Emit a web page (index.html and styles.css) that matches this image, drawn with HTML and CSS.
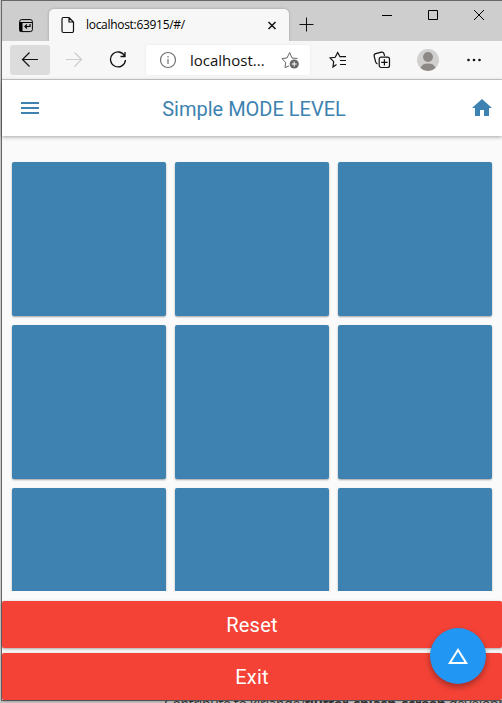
FILE: index.html
```html
<!DOCTYPE html>
<html lang="en">
<head>
<meta charset="utf-8">
<title>Simple MODE LEVEL</title>
<link rel="stylesheet" href="styles.css">
</head>
<body>
<div class="window">
  <div class="tabstrip">
    <svg class="tab-actions" width="16" height="16" viewBox="0 0 16 16" fill="none" stroke="#000"><rect x="1.600" y="2.600" width="12.800" height="12" rx="2"/><path d="M2 5.500h12" /><path d="M3 5v9.500" stroke-width="3"/><path d="M12 7v2.500H7M9 7.500L7 9.500l2 2" stroke-width="1.200"/></svg>
    <div class="tab">
      <svg width="14" height="18" viewBox="0 0 14 18" fill="none" stroke="#111" stroke-width="1.200"><path d="M2.500 1.500H8l4.500 4.500v9a1.500 1.500 0 0 1-1.500 1.500H2.500A1.500 1.500 0 0 1 1 15V3a1.500 1.500 0 0 1 1.500-1.500zM8 1.500V6h4.500"/></svg>
      <span class="tab-title">localhost:63915/#/</span>
      <svg class="tab-close" width="10" height="10" viewBox="0 0 10 10" stroke="#111" stroke-width="1.500"><path d="M1.500 2l7 7M8.500 2l-7 7"/></svg>
    </div>
    <svg class="new-tab" width="15" height="15" viewBox="0 0 15 15" stroke="#111"><path d="M7.500 0.500v14M0.500 7.500h14"/></svg>
    <div class="controls">
      <svg width="10" height="10" viewBox="0 0 10 10" stroke="#000"><path d="M0 5.500h10"/></svg>
      <svg width="10" height="10" viewBox="0 0 10 10" fill="none" stroke="#000"><path d="M.5.5h9v9h-9z"/></svg>
      <svg width="10" height="10" viewBox="0 0 10 10" stroke="#000"><path d="M0 0l10 10M10 0L0 10"/></svg>
    </div>
  </div>
  <div class="toolbar">
    <div class="back"><svg width="18" height="16" viewBox="0 0 18 16" fill="none" stroke="#111" stroke-width="1.200"><path d="M17 7.500H1.500M8.500.5l-7 7 7 7"/></svg></div>
    <svg class="forward" width="18" height="16" viewBox="0 0 18 16" fill="none" stroke="#ccc" stroke-width="1.200"><path d="M1 7.500h15.500M9.500.5l7 7-7 7"/></svg>
    <svg class="reload" width="18" height="18" viewBox="0 0 18 18" fill="none" stroke="#111" stroke-width="1.300"><path d="M15.700 5A7.500 7.500 0 1 0 16.500 9M16 1v4.500h-4.500"/></svg>
    <div class="address">
      <svg width="18" height="18" viewBox="0 0 18 18" fill="none" stroke="#717171" stroke-width="1.200"><circle cx="9" cy="9" r="7.500"/><path d="M9 8v5M9 5v1.500"/></svg>
      <span class="url">localhost...</span>
      <svg class="star" width="19" height="18" viewBox="0 0 19 18" fill="none" stroke="#666"><path d="M8 15l-4 1.500.7-5L1 7.500 6 7l2.700-5.500L11 7l5.500.5"/><circle cx="13.200" cy="13" r="4.600" fill="#666" stroke="none"/><path d="M13.200 10.500v5M10.700 13h5" stroke="#fff"/></svg>
    </div>
    <svg class="favorites" width="18" height="18" viewBox="0 0 18 18" fill="none" stroke="#111" stroke-width="1.200"><path d="M7.500 13.500L4 16l.7-5.300L1 7l5.200-.7L8.700 1.500l2.300 4.200H17M11 9.500h6M11 13.500h6"/></svg>
    <svg class="collections" width="18" height="18" viewBox="0 0 18 18" fill="none" stroke="#111" stroke-width="1.200"><path d="M4.500 13C3.500 12.500 3 12 2.700 11L1.200 5.300C.9 4 1.400 3 2.600 2.600L8.500 1.200c1.400-.3 2 .2 2.500 1.600l.6 2"/><rect x="6.200" y="6.200" width="10.300" height="10.300" rx="2"/><path d="M11.400 8.200v6.400M8.200 11.400h6.400"/></svg>
    <svg class="profile" width="22" height="22" viewBox="0 0 22 22"><circle cx="11" cy="11" r="11" fill="#d2d0ce"/><circle cx="11" cy="8" r="5" fill="#8c8886"/><path d="M3.500 19c1-3.300 3.500-4.500 7.500-4.500s6.500 1.200 7.500 4.500a11 11 0 0 1-15 0z" fill="#8c8886"/></svg>
    <svg class="more" width="14" height="4" viewBox="0 0 14 4" fill="#111"><circle cx="1.500" cy="2" r="1.300"/><circle cx="7" cy="2" r="1.300"/><circle cx="12.500" cy="2" r="1.300"/></svg>
  </div>
  <div class="app">
    <header class="appbar">
      <svg width="24" height="24" viewBox="0 0 24 24" fill="#3d82b0"><path d="M3 18h18v-2H3v2zm0-5h18v-2H3v2zm0-7v2h18V6H3z"/></svg>
      <h1>Simple MODE LEVEL</h1>
      <svg width="24" height="24" viewBox="0 0 24 24" fill="#3d82b0"><path d="M10 20v-6h4v6h5v-8h3L12 3 2 12h3v8z"/></svg>
    </header>
    <main class="grid">
      <div class="card"></div><div class="card"></div><div class="card"></div>
      <div class="card"></div><div class="card"></div><div class="card"></div>
      <div class="card"></div><div class="card"></div><div class="card"></div>
    </main>
    <div class="actions">
      <button>Reset</button>
      <button>Exit</button>
    </div>
    <div class="fab"><svg width="24" height="24" viewBox="0 0 24 24" fill="#fff"><path d="M12 7.770L18.390 18H5.610L12 7.770M12 4L2 20h20L12 4z"/></svg></div>
  </div>
</div>
<div class="behind">Contribute to kiriande/<b>flutter_splash_screen</b> development</div>
</body>
</html>
```
FILE: styles.css
```css
* { box-sizing: border-box; }
body {
  margin: 0;
  width: 502px;
  height: 703px;
  overflow: hidden;
  background: #c9c7c6;
}
svg { display: block; flex: none; }
.window {
  height: 701px;
  margin-left: 1px;
  border: solid #68666a;
  border-width: 1px 0 1px 1px;
  background: #fafafa;
}
.tabstrip {
  display: flex;
  height: 40px;
  background: #cecece;
}
.tab-actions { margin: 16px 15px 0 16px; }
.tab {
  display: flex;
  align-items: center;
  width: 240px;
  height: 32px;
  margin-top: 8px;
  padding: 0 12px;
  border-radius: 5px 5px 0 0;
  background: #f7f7f7;
  box-shadow: 0 0 3px rgba(0, 0, 0, .25);
}
.tab-title {
  margin-left: 11px;
  font: 12px/16px "Open Sans", "Noto Sans", sans-serif;
  letter-spacing: -.3px;
  color: #000;
}
.tab-close { margin-left: auto; }
.new-tab { margin: 16px 0 0 10px; }
.controls {
  display: flex;
  gap: 36px;
  margin: 9px 18px 0 auto;
}
.toolbar {
  position: relative;
  display: flex;
  align-items: center;
  height: 39px;
  padding-left: 8px;
  background: #f7f7f7;
  border-bottom: 1px solid #ccc;
}
.back {
  display: flex;
  align-items: center;
  justify-content: center;
  width: 40px;
  height: 30px;
  border-radius: 3px;
  background: #dcdcdc;
}
.forward { margin-left: 15px; }
.reload { margin-left: 26px; }
.address {
  display: flex;
  align-items: center;
  width: 164px;
  height: 30px;
  margin-left: 19px;
  padding: 0 10px 0 13px;
  border-radius: 4px;
  background: #fff;
  box-shadow: 0 0 3px rgba(0, 0, 0, .06);
}
.url {
  margin-left: 13px;
  font: 15px/20px "Open Sans", "Noto Sans", sans-serif;
  color: #111;
}
.star { margin-left: auto; }
.favorites { margin-left: 19px; }
.collections { margin-left: 26px; }
.profile { margin-left: 26px; }
.more { margin-left: 28px; }
.app {
  position: relative;
  height: 620px;
  font-family: Roboto, sans-serif;
}
.appbar {
  position: relative;
  display: flex;
  align-items: center;
  justify-content: space-between;
  height: 56px;
  padding: 0 8px 0 16px;
  background: #fff;
  box-shadow: 0 1px 4px rgba(0, 0, 0, .35);
}
.appbar h1 {
  margin: 0;
  padding: 2px 4px 0 0;
  font-size: 20px;
  font-weight: 400;
  color: #3d82b0;
}
.grid {
  display: grid;
  grid-template-columns: repeat(3, 154px);
  grid-auto-rows: 154px;
  gap: 9px;
  height: 455px;
  padding: 26px 10px 0;
  overflow: hidden;
}
.card {
  border-radius: 2px;
  background: #3d82b0;
  box-shadow: 0 1px 2px rgba(0, 0, 0, .35);
}
.actions {
  display: grid;
  gap: 5px;
  padding-top: 10px;
}
.actions button {
  height: 47px;
  padding: 2px 0 0;
  border: 0;
  border-radius: 2px;
  background: #f44336;
  box-shadow: 0 1px 3px rgba(0, 0, 0, .35);
  font: 400 20px/45px Roboto, sans-serif;
  letter-spacing: .25px;
  color: #fff;
}
.fab {
  position: absolute;
  right: 16px;
  bottom: 16px;
  display: flex;
  align-items: center;
  justify-content: center;
  width: 56px;
  height: 56px;
  border-radius: 50%;
  background: #2196f3;
  box-shadow: 0 3px 6px rgba(0, 0, 0, .35);
}
.behind {
  height: 2px;
  padding-left: 164px;
  overflow: hidden;
  font: 14px/6px "Open Sans", sans-serif;
  letter-spacing: -.35px;
  white-space: nowrap;
  color: #333;
}
```
